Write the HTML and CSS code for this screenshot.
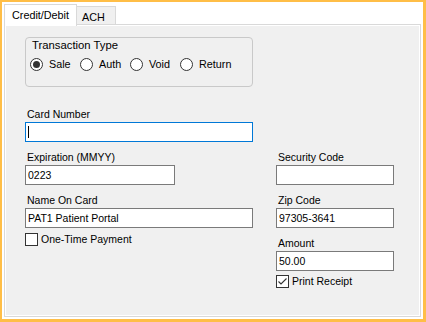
FILE: index.html
```html
<!DOCTYPE html>
<html>
<head>
<meta charset="utf-8">
<link rel="stylesheet" href="styles.css">
</head>
<body>
<div class="frame">
  <div class="tabs">
    <div class="tabstrip">
      <div class="tab active">Credit/Debit</div>
      <div class="tab">ACH</div>
    </div>
    <div class="panel">
      <div class="page">
        <div class="group">
          <div class="group-title">Transaction Type</div>
          <div class="radios">
            <div class="radio-item"><span class="radio checked"></span><span>Sale</span></div>
            <div class="radio-item"><span class="radio"></span><span>Auth</span></div>
            <div class="radio-item"><span class="radio"></span><span>Void</span></div>
            <div class="radio-item"><span class="radio"></span><span>Return</span></div>
          </div>
        </div>
        <div class="fields">
          <div class="col left">
            <div class="field">
              <div class="label">Card Number</div>
              <div class="input focus w-full"><span class="caret"></span></div>
            </div>
            <div class="field">
              <div class="label">Expiration (MMYY)</div>
              <div class="input w-exp">0223</div>
            </div>
            <div class="field">
              <div class="label">Name On Card</div>
              <div class="input w-full">PAT1 Patient Portal</div>
            </div>
            <div class="check-row one-time">
              <span class="checkbox"></span><span>One-Time Payment</span>
            </div>
          </div>
          <div class="col right">
            <div class="field">
              <div class="label">Security Code</div>
              <div class="input w-small"></div>
            </div>
            <div class="field">
              <div class="label">Zip Code</div>
              <div class="input w-small">97305-3641</div>
            </div>
            <div class="field">
              <div class="label">Amount</div>
              <div class="input w-small">50.00</div>
            </div>
            <div class="check-row print">
              <span class="checkbox"><svg width="11" height="11" viewBox="0 0 11 11"><path d="M1.5 5.5 L4 8 L9.5 2.5" fill="none" stroke="#333" stroke-width="1.1"/></svg></span><span>Print Receipt</span>
            </div>
          </div>
        </div>
      </div>
    </div>
  </div>
</div>
</body>
</html>
```

FILE: styles.css
```css
html, body {
  margin: 0;
  padding: 0;
  background: #ffffff;
}

body {
  width: 426px;
  height: 322px;
  overflow: hidden;
  font-family: "Liberation Sans", Arial, sans-serif;
  color: #000;
}

.frame {
  width: 426px;
  height: 322px;
  box-sizing: border-box;
  border-style: solid;
  border-color: #FFBE47;
  border-width: 2px 3px 3px 2px;
  padding: 2px;
  background: #ffffff;
}

.tabs {
  width: 417px;
  height: 313px;
  display: flex;
  flex-direction: column;
}

.tabstrip {
  display: flex;
  align-items: flex-end;
  height: 20px;
  flex-shrink: 0;
}

.tab {
  box-sizing: border-box;
  border: 1px solid #D9D9D9;
  border-bottom: none;
  font-size: 10.8px;
  line-height: 14px;
  white-space: nowrap;
}

.tab.active {
  width: 73px;
  height: 22px;
  margin-bottom: -2px;
  background: #ffffff;
  padding-left: 7px;
  padding-top: 3px;
  position: relative;
  z-index: 1;
}

.tab:not(.active) {
  width: 40px;
  height: 18px;
  margin-left: -1px;
  background: #F0F0F0;
  padding-left: 5px;
  padding-top: 3px;
}

.panel {
  flex: 1;
  box-sizing: border-box;
  border: 1px solid #D9D9D9;
  padding: 1px;
  background: #ffffff;
}

.page {
  height: 100%;
  box-sizing: border-box;
  background: #F0F0F0;
  padding: 11px 0 0 19px;
}

.group {
  width: 228px;
  height: 50px;
  box-sizing: border-box;
  border: 1px solid #C9C9C9;
  border-radius: 4px;
}

.group-title {
  margin-left: 6px;
  font-size: 11.3px;
  line-height: 14px;
}

.radios {
  display: flex;
  align-items: center;
  margin-top: 6px;
  margin-left: 4px;
  height: 13px;
}

.radio-item {
  display: flex;
  align-items: center;
  gap: 6px;
  width: 50px;
  flex-shrink: 0;
  font-size: 10.8px;
  line-height: 13px;
}

.radio {
  width: 13px;
  height: 13px;
  box-sizing: border-box;
  border: 1px solid #333;
  border-radius: 50%;
  background: #fff;
  display: flex;
  align-items: center;
  justify-content: center;
  flex-shrink: 0;
}

.radio.checked::after {
  content: "";
  width: 7px;
  height: 7px;
  border-radius: 50%;
  background: #333;
}

.fields {
  display: flex;
  gap: 23px;
  margin-top: 20px;
}

.col {
  display: flex;
  flex-direction: column;
  gap: 8px;
}

.col.left {
  width: 228px;
}

.col.right {
  width: 118px;
  margin-top: 43px;
}

.label {
  font-size: 10.5px;
  line-height: 14px;
  padding-left: 2px;
  margin-bottom: 1px;
  white-space: nowrap;
}

.input {
  height: 20px;
  box-sizing: border-box;
  border: 1px solid #7A7A7A;
  background: #ffffff;
  padding-left: 2px;
  font-size: 10.5px;
  line-height: 18px;
  white-space: nowrap;
  display: flex;
  align-items: center;
}

.input.focus {
  border-color: #0078D7;
}

.w-full { width: 228px; }
.w-exp { width: 150px; }
.w-small { width: 118px; }

.caret {
  display: inline-block;
  width: 1px;
  height: 12px;
  background: #000;
}

.check-row {
  display: flex;
  align-items: center;
  gap: 3px;
  height: 13px;
  font-size: 10.5px;
  line-height: 13px;
  white-space: nowrap;
}

.check-row.one-time {
  margin-top: -3px;
}

.check-row.print {
  margin-top: -4px;
}

.checkbox {
  width: 13px;
  height: 13px;
  box-sizing: border-box;
  border: 1px solid #333;
  background: #fff;
  display: flex;
  align-items: center;
  justify-content: center;
  flex-shrink: 0;
}

.checkbox svg {
  display: block;
}
```
